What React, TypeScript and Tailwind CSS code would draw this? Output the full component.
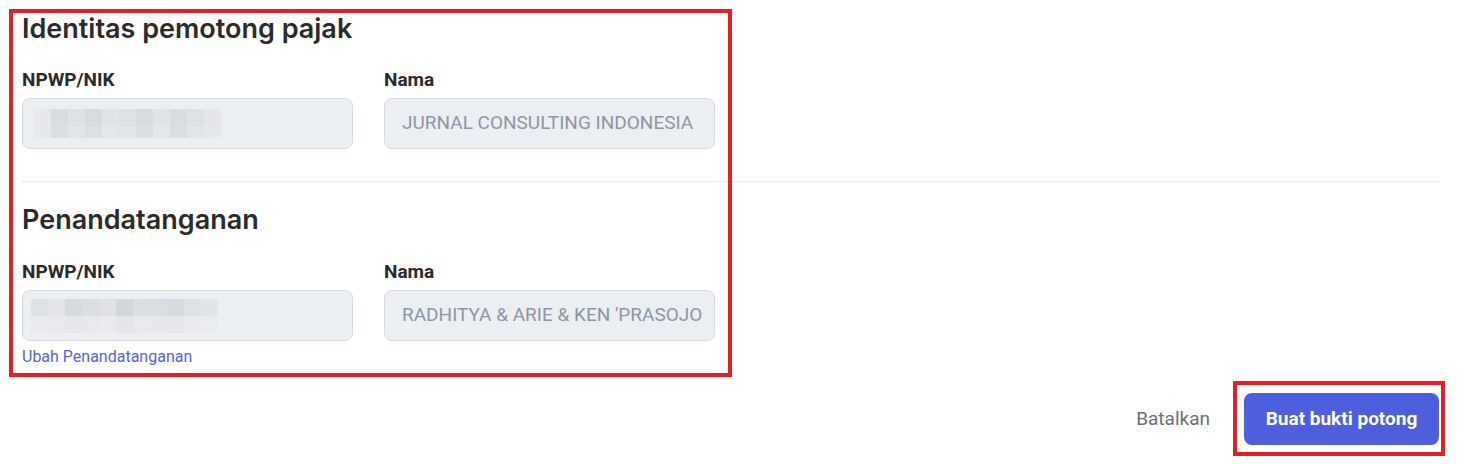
import React from "react";

const mosaicA = [
  ["#e6e8eb", "#d9dce0", "#dfe2e5", "#d8dbdf", "#e1e3e6", "#dfe2e5", "#d8dbdf", "#e1e4e7", "#d9dce0", "#dfe2e5", "#e4e6e9"],
  ["#e6e8eb", "#dcdfe2", "#e3e5e8", "#dcdfe3", "#e5e7ea", "#e3e5e8", "#dcdfe2", "#e5e7ea", "#dcdfe2", "#e3e5e8", "#e6e8eb"],
];

const mosaicB = [
  ["#dfe2e5", "#e3e5e8", "#d7dade", "#dcdfe2", "#e0e2e6", "#d3d6da", "#dcdfe2", "#dadde1", "#d7dade", "#dfe2e5", "#e2e4e7"],
  ["#e8eaed", "#e7e9ec", "#e5e7ea", "#e7e9ec", "#e8eaed", "#e4e6e9", "#e7e9ec", "#e6e8eb", "#e5e7ea", "#e8eaed", "#e9ebee"],
];

/** Pixelated (redacted) NPWP value, as in the screenshot. */
function Mosaic({ rows, rowHeights }: { rows: string[][]; rowHeights: string[] }) {
  return (
    <div className="flex flex-col" aria-label="NPWP disamarkan">
      {rows.map((row, i) => (
        <div key={i} className="flex">
          {row.map((c, j) => (
            <span key={j} className={`block w-[17px] ${rowHeights[i]}`} style={{ backgroundColor: c }} />
          ))}
        </div>
      ))}
    </div>
  );
}

function Field({ label, children, pad }: { label: string; children: React.ReactNode; pad: string }) {
  return (
    <div className="w-[331px]">
      <p className="text-[19px] leading-[24px] font-bold text-[#2b2b2b]">{label}</p>
      <div
        className={`mt-[6px] flex h-[51px] items-center rounded-lg border border-[#d5dae0] bg-[#eceff2] ${pad} text-[19px] text-[#8c96a4] whitespace-nowrap overflow-hidden`}
      >
        {children}
      </div>
    </div>
  );
}

export default function App() {
  return (
    <div className="relative h-[464px] w-full bg-white font-['Roboto','Liberation_Sans',sans-serif] px-[22px] pt-[13px]">
      <h2 className="font-['Inter','Roboto',sans-serif] text-[27px] leading-[32px] font-semibold text-[#2b2b2b]">
        Identitas pemotong pajak
      </h2>
      <div className="mt-[23px] flex gap-[31px]">
        <Field label="NPWP/NIK" pad="pl-[11px]">
          <Mosaic rows={mosaicA} rowHeights={["h-[17px]", "h-[12px]"]} />
        </Field>
        <Field label="Nama" pad="pl-[17px]">
          JURNAL CONSULTING INDONESIA
        </Field>
      </div>

      <hr className="mt-[32px] border-t border-[#e5e7eb]" />

      <h2 className="mt-[22px] font-['Inter','Roboto',sans-serif] text-[27px] leading-[32px] font-semibold text-[#2b2b2b]">
        Penandatanganan
      </h2>
      <div className="mt-[24px] flex gap-[31px]">
        <div>
          <Field label="NPWP/NIK" pad="pl-[8px]">
            <Mosaic rows={mosaicB} rowHeights={["h-[17px]", "h-[17px]"]} />
          </Field>
          <a href="#" className="mt-[6px] block text-[16px] leading-[20px] text-[#5862d8]">
            Ubah Penandatanganan
          </a>
        </div>
        <Field label="Nama" pad="pl-[17px]">
          RADHITYA &amp; ARIE &amp; KEN 'PRASOJO
        </Field>
      </div>

      <div className="mt-[26px] flex items-center justify-end gap-[34px] pr-px">
        <button className="text-[19px] text-[#6b6f76]">Batalkan</button>
        <span className="relative">
          <button className="h-[52px] w-[195px] rounded-lg bg-[#4d5fdd] text-[19px] font-bold text-white">
            Buat bukti potong
          </button>
          <span className="pointer-events-none absolute -left-[11px] -right-[6px] -top-[12px] -bottom-[11px] border-4 border-[#ea1d25]" />
        </span>
      </div>

      <span className="pointer-events-none absolute left-[9px] top-[9px] h-[368px] w-[723px] border-4 border-[#ea1d25]" />
    </div>
  );
}
